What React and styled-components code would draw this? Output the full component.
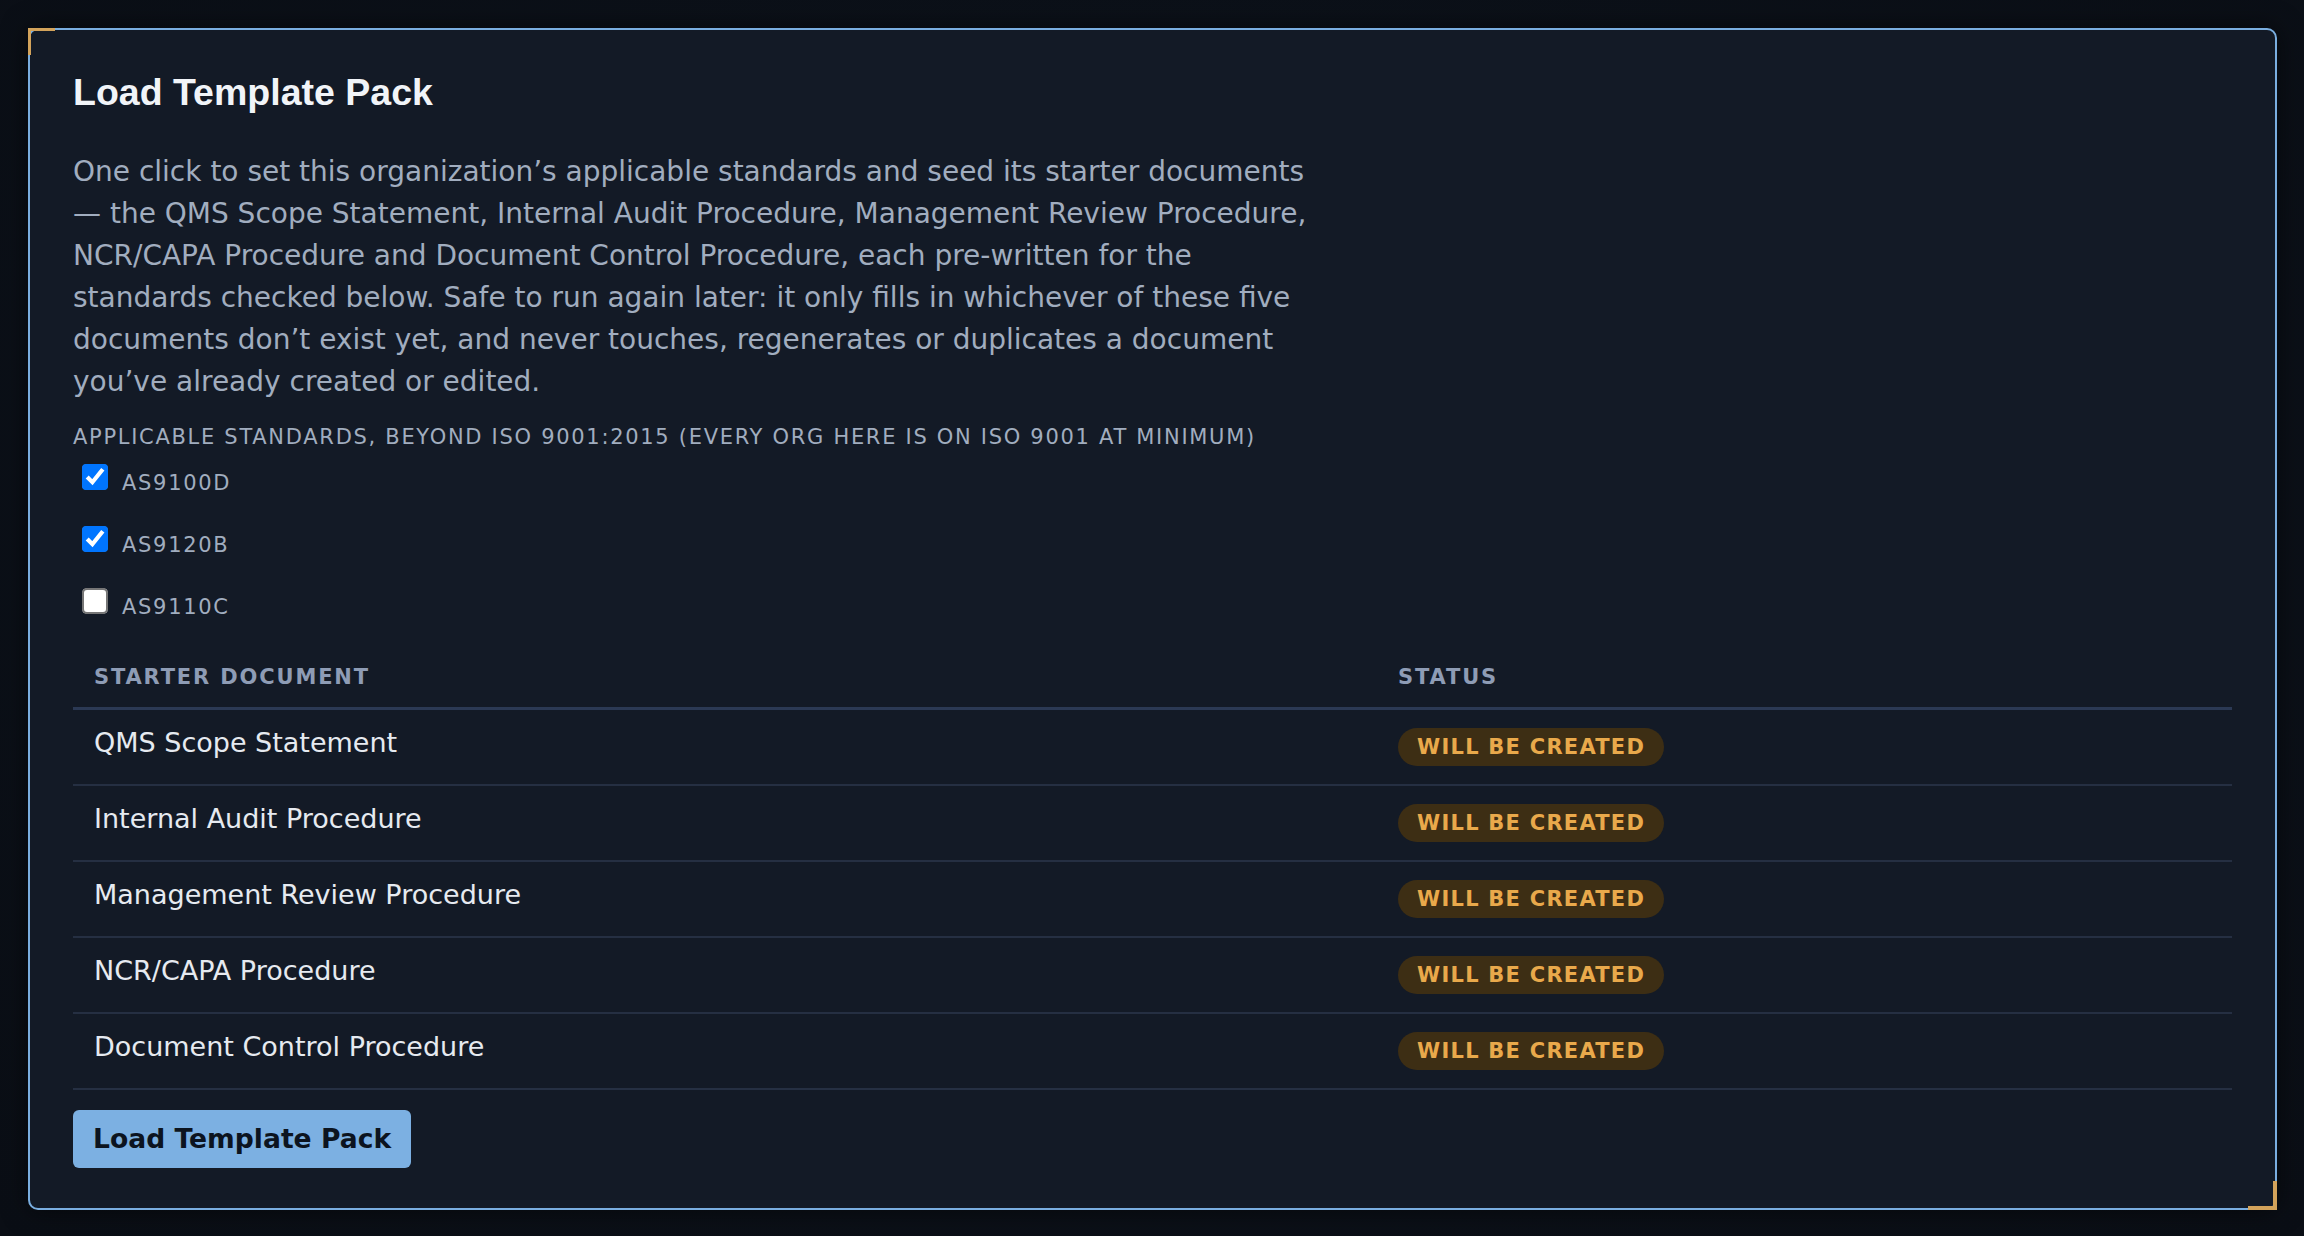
import React from "react";
import styled, { createGlobalStyle } from "styled-components";

const GlobalStyle = createGlobalStyle`
  html, body {
    margin: 0;
    padding: 0;
    background: #0b1018;
  }
  body {
    font-family: "DejaVu Sans", "Noto Sans", sans-serif;
  }
  * { box-sizing: border-box; }
`;

const Page = styled.div`
  min-height: 1236px;
  padding: 28px 27px 26px 28px;
  background: radial-gradient(ellipse at 50% 40%, #0d131c 0%, #0a0e15 100%);
`;

const Card = styled.section`
  position: relative;
  background: #131a26;
  border: 2px solid #7aaee0;
  border-radius: 10px;
  padding: 41px 43px 40px 43px;
  box-shadow: 0 0 26px rgba(0, 0, 0, 0.55);

  &::before {
    content: "";
    position: absolute;
    top: -2px;
    left: -2px;
    width: 24px;
    height: 24px;
    border-top: 3px solid #d3a35b;
    border-left: 3px solid #d3a35b;
  }
  &::after {
    content: "";
    position: absolute;
    bottom: -2px;
    right: -2px;
    width: 25px;
    height: 25px;
    border-bottom: 4px solid #d3a35b;
    border-right: 4px solid #d3a35b;
  }
`;

const Title = styled.h2`
  margin: 0 0 39px;
  padding-top: 1px;
  font-family: "Liberation Sans", Arial, sans-serif;
  font-weight: 700;
  font-size: 37.5px;
  line-height: 40px;
  color: #f1f4f8;
`;

const Intro = styled.p`
  margin: 0 0 22px;
  max-width: 1252px;
  font-size: 28px;
  line-height: 42px;
  color: #a1adbf;
`;

const FieldLabel = styled.div`
  margin-bottom: 3px;
  font-size: 21px;
  line-height: 24px;
  letter-spacing: 1.7px;
  text-transform: uppercase;
  color: #a1adbf;
`;

const CheckRow = styled.label`
  display: flex;
  align-items: center;
  height: 62px;
  font-size: 21px;
  line-height: 24px;
  letter-spacing: 1.7px;
  color: #a1adbf;
  cursor: pointer;
`;

const Check = styled.input.attrs({ type: "checkbox" })`
  zoom: 2;
  width: 13px;
  height: 13px;
  margin: 0 7px 5.7px 4.5px;
  flex: none;
`;

const Table = styled.table`
  width: 100%;
  margin-top: 9px;
  border-collapse: collapse;
`;

const Th = styled.th`
  width: ${(p) => p.$w || "auto"};
  padding: 18px 21px;
  text-align: left;
  font-size: 21px;
  font-weight: 700;
  line-height: normal;
  letter-spacing: 1.85px;
  text-transform: uppercase;
  color: #8e9cb5;
  border-bottom: 3px solid #2b3954;
`;

const Tr = styled.tr`
  border-bottom: 2px solid #252f42;
`;

const Td = styled.td`
  padding: ${(p) => (p.$text ? "17px 21px 19px" : "18px 21px")};
  vertical-align: top;
  font-size: 27px;
  line-height: normal;
  color: #e6eaf0;
`;

const Badge = styled.span`
  display: flex;
  align-items: center;
  width: max-content;
  height: 38px;
  padding: 0 19px;
  border-radius: 19px;
  background: #3d2e14;
  color: #e9a94b;
  font-size: 21px;
  font-weight: 700;
  letter-spacing: 1.25px;
  text-transform: uppercase;
`;

const Button = styled.button`
  display: flex;
  align-items: center;
  justify-content: center;
  margin-top: 20px;
  height: 58px;
  padding: 0 20px 2px;
  border: none;
  border-radius: 6px;
  background: #7cb0e2;
  color: #0c1420;
  font-family: "DejaVu Sans", sans-serif;
  font-size: 26.6px;
  font-weight: 700;
  cursor: pointer;
`;

const standards = [
  { id: "AS9100D", checked: true },
  { id: "AS9120B", checked: true },
  { id: "AS9110C", checked: false },
];

const docs = [
  "QMS Scope Statement",
  "Internal Audit Procedure",
  "Management Review Procedure",
  "NCR/CAPA Procedure",
  "Document Control Procedure",
];

export default function App() {
  return (
    <>
      <GlobalStyle />
      <Page>
        <Card>
          <Title>Load Template Pack</Title>
          <Intro>
            One click to set this organization’s applicable standards and seed
            its starter documents — the QMS Scope Statement, Internal Audit
            Procedure, Management Review Procedure, NCR/CAPA Procedure and
            Document Control Procedure, each pre-written for the standards
            checked below. Safe to run again later: it only fills in whichever
            of these five documents don’t exist yet, and never touches,
            regenerates or duplicates a document you’ve already created or
            edited.
          </Intro>
          <FieldLabel>
            Applicable standards, beyond ISO 9001:2015 (every org here is on ISO
            9001 at minimum)
          </FieldLabel>
          {standards.map((s) => (
            <CheckRow key={s.id}>
              <Check defaultChecked={s.checked} />
              {s.id}
            </CheckRow>
          ))}
          <Table>
            <thead>
              <tr>
                <Th $w="60.4%">Starter document</Th>
                <Th>Status</Th>
              </tr>
            </thead>
            <tbody>
              {docs.map((d) => (
                <Tr key={d}>
                  <Td $text>{d}</Td>
                  <Td>
                    <Badge>Will be created</Badge>
                  </Td>
                </Tr>
              ))}
            </tbody>
          </Table>
          <Button>Load Template Pack</Button>
        </Card>
      </Page>
    </>
  );
}
